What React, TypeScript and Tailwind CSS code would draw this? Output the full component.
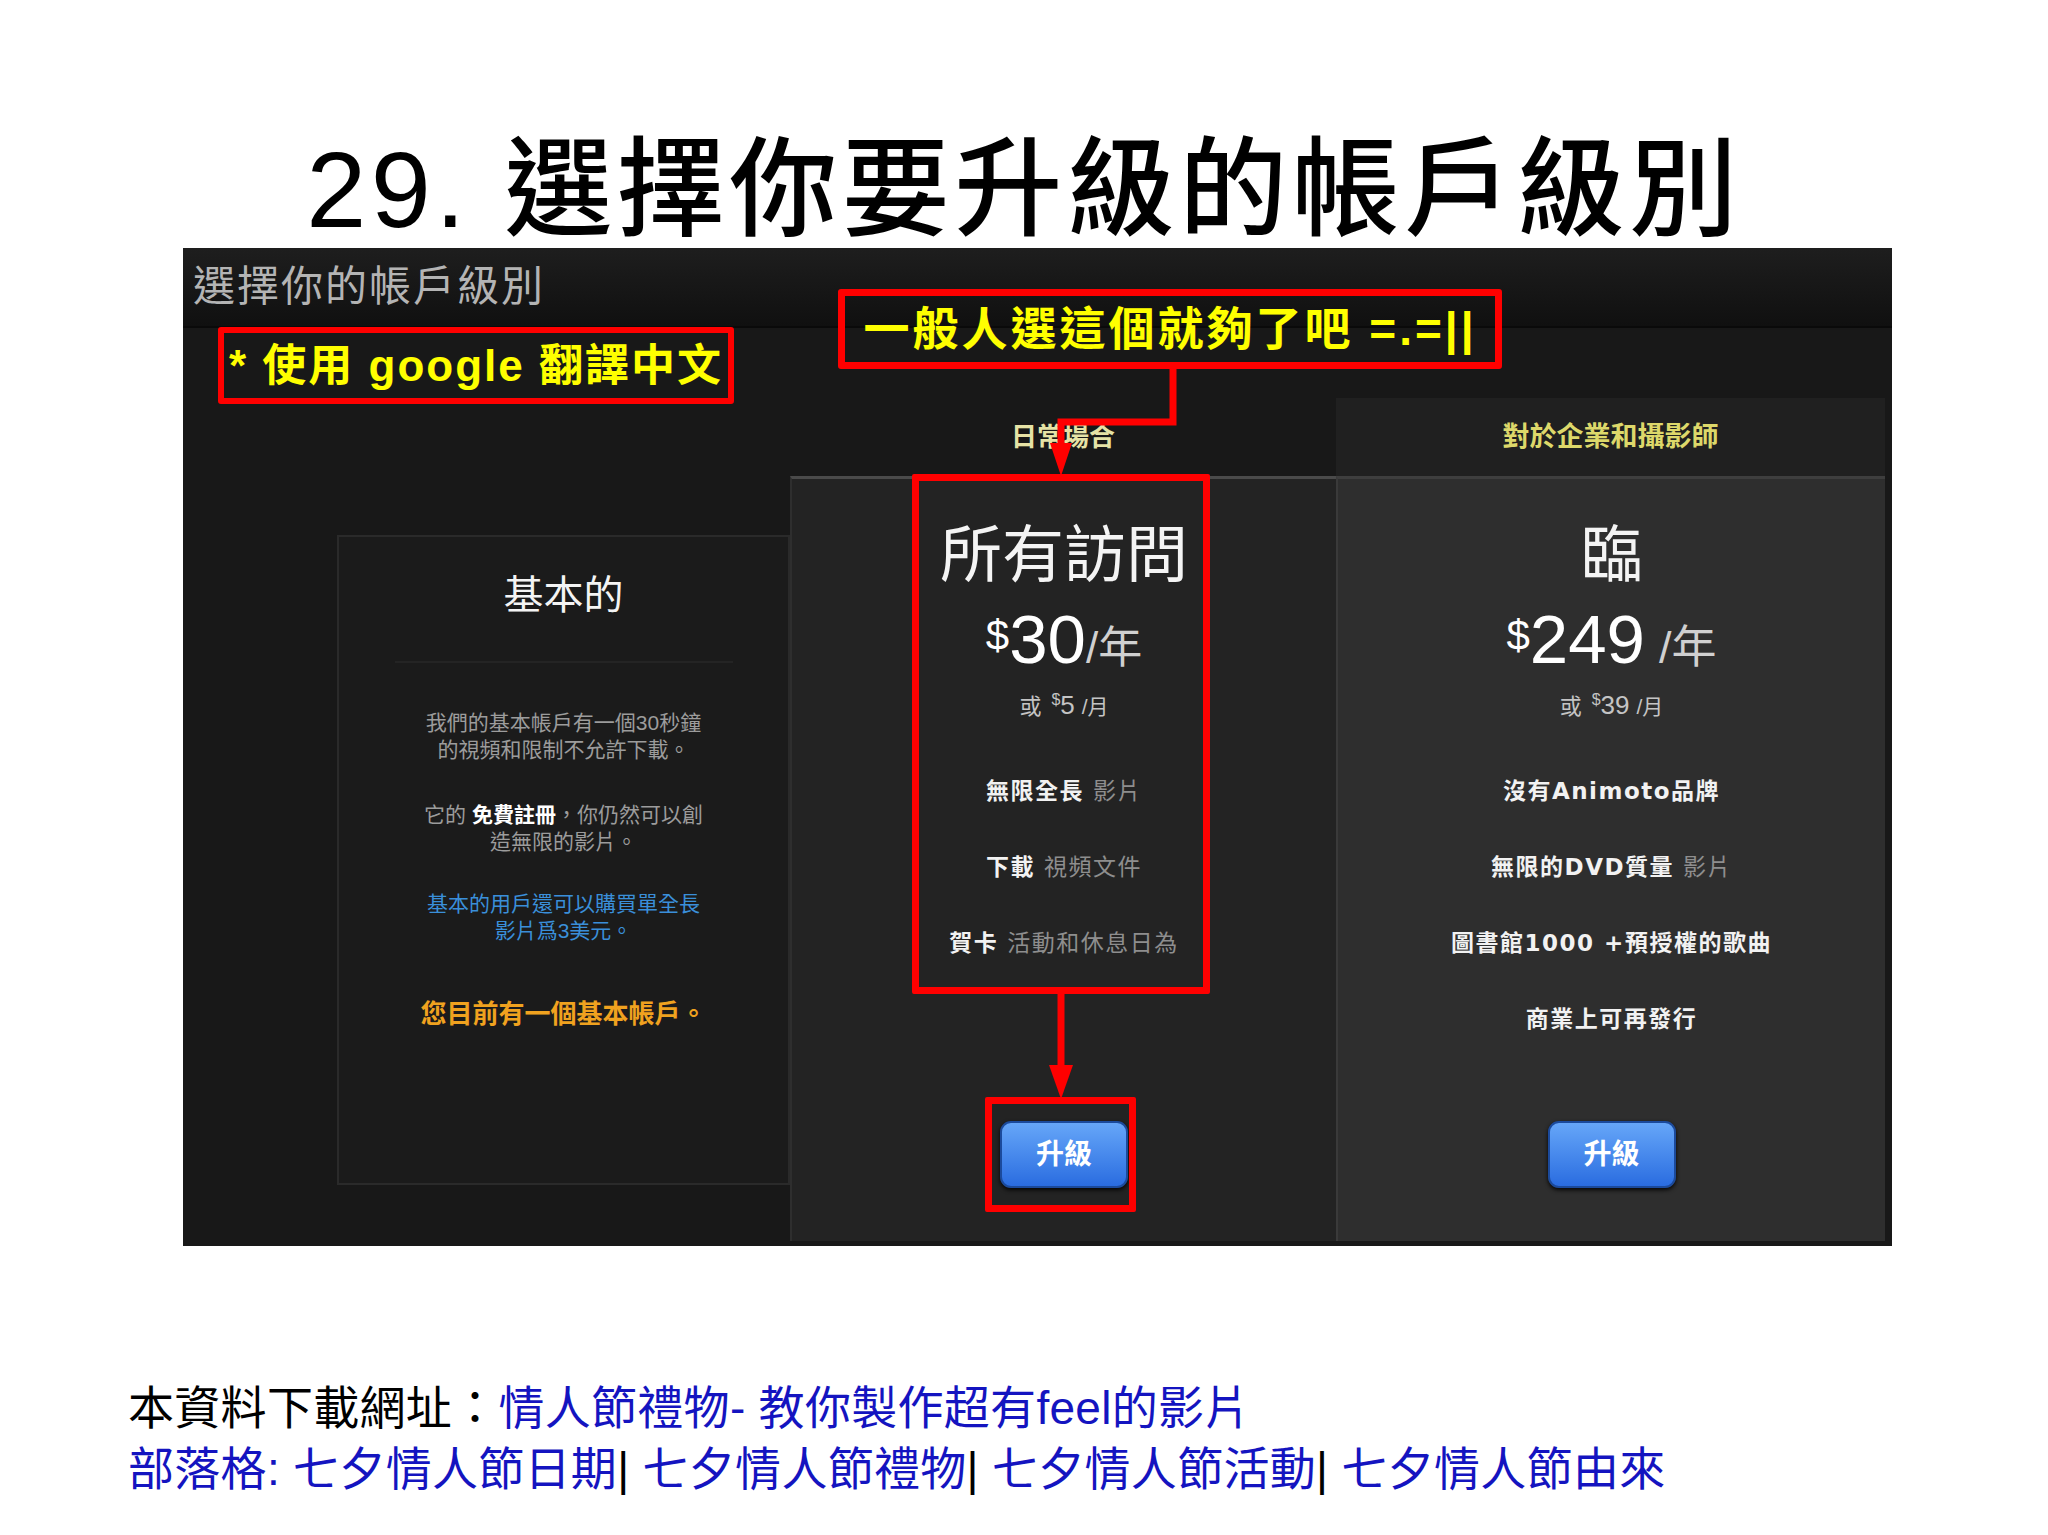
import React from "react";

function Feature({ bold, rest }: { bold: string; rest?: string }) {
  return (
    <div className="h-[76px] whitespace-nowrap font-['DejaVu_Sans','Noto_Sans_CJK_TC',sans-serif] text-[23px] leading-[76px] tracking-[1.5px]">
      <span className="font-bold text-[#f2f2f2]">{bold}</span>
      {rest && <span className="text-[#8e8e8e]"> {rest}</span>}
    </div>
  );
}

function UpgradeButton() {
  return (
    <div className="flex h-[67px] w-[128px] items-center justify-center rounded-[11px] border-2 border-[#1b4a9c] bg-linear-to-b from-[#66a6f8] to-[#2a6ce0] text-[28px] font-bold leading-none text-white shadow-[0_2px_4px_rgba(0,0,0,0.9)]">
      升級
    </div>
  );
}

function BasicCard() {
  return (
    <div className="mt-[207px] flex h-[650px] w-[453px] flex-col items-center border-2 border-[#2a2a2a] bg-[#1b1b1b] pt-[38px] text-center">
      <div className="text-[40px] leading-none text-[#f4f4f4]">基本的</div>
      <div className="mt-[46px] h-[2px] w-[338px] bg-[#242424]" />
      <p className="mt-[46px] text-[21px] leading-[27px] text-[#9c9c9c]">
        我們的基本帳戶有一個30秒鐘
        <br />
        的視頻和限制不允許下載。
      </p>
      <p className="mt-[38px] text-[21px] leading-[27px] text-[#9c9c9c]">
        它的 <span className="font-bold text-white">免費註冊</span>，你仍然可以創
        <br />
        造無限的影片。
      </p>
      <p className="mt-[35px] text-[21px] leading-[27px] text-[#3a8fd9]">
        基本的用戶還可以購買單全長
        <br />
        影片爲3美元。
      </p>
      <p className="mt-[57px] text-[26px] font-bold leading-[27px] text-[#f0a21f]">
        您目前有一個基本帳戶。
      </p>
    </div>
  );
}

function Panel() {
  return (
    <div className="relative ml-[183px] flex h-[998px] w-[1709px] flex-col bg-[#181818]">
      {/* window heading */}
      <div className="flex h-[80px] items-center border-b-2 border-[#0a0a0a] bg-linear-to-b from-[#1e1e1e] to-[#101010] pl-[10px] text-[42px] leading-none tracking-[2px] text-[#b4b4b4]">
        選擇你的帳戶級別
      </div>

      <div className="flex flex-1 items-start pb-[5px] pl-[154px] pr-[7px]">
        <BasicCard />

        {/* all access */}
        <div className="flex w-[546px] flex-col self-stretch pt-[70px]">
          <div className="flex h-[78px] items-center justify-center text-[26px] font-bold leading-none text-[#e6e3a6]">
            日常場合
          </div>
          <div className="flex flex-1 flex-col items-center border-l-2 border-t-[3px] border-l-[#2e2e2e] border-t-[#4a4a4a] bg-[#232323] pb-[53px] pt-[46px]">
            <div className="text-[62px] leading-none text-[#f4f4f4]">所有訪問</div>
            <div className="mt-[18px] flex items-baseline text-white">
              <span className="mt-[10px] self-start text-[42px] leading-none">$</span>
              <span className="text-[69px] leading-none">30</span>
              <span className="text-[44px] leading-none text-[#d0d0d0]">/年</span>
            </div>
            <div className="mt-[18px] flex items-baseline text-[#c4c4c4]">
              <span className="text-[22px] leading-none">或</span>
              <span className="ml-[10px] self-start text-[16px] leading-none">$</span>
              <span className="text-[26px] leading-none">5</span>
              <span className="ml-[7px] text-[21px] leading-none">/月</span>
            </div>
            <div className="mt-[35px] flex flex-col items-center">
              <Feature bold="無限全長" rest="影片" />
              <Feature bold="下載" rest="視頻文件" />
              <Feature bold="賀卡" rest="活動和休息日為" />
            </div>
            <div className="flex-1" />
            <UpgradeButton />
          </div>
        </div>

        {/* pro */}
        <div className="flex w-[549px] flex-col self-stretch pt-[70px]">
          <div className="flex h-[78px] items-center justify-center bg-[#202020] text-[27px] font-bold leading-none text-[#ddd86a]">
            對於企業和攝影師
          </div>
          <div className="flex flex-1 flex-col items-center border-l-2 border-t-[3px] border-l-[#3a3a3a] border-t-[#3e3e3e] bg-[#2e2e2e] pb-[53px] pt-[46px]">
            <div className="text-[62px] leading-none text-[#f4f4f4]">臨</div>
            <div className="mt-[18px] flex items-baseline text-white">
              <span className="mt-[10px] self-start text-[42px] leading-none">$</span>
              <span className="text-[69px] leading-none">249</span>
              <span className="ml-[14px] text-[45px] leading-none text-[#d0d0d0]">/年</span>
            </div>
            <div className="mt-[18px] flex items-baseline text-[#c4c4c4]">
              <span className="text-[22px] leading-none">或</span>
              <span className="ml-[10px] self-start text-[16px] leading-none">$</span>
              <span className="text-[26px] leading-none">39</span>
              <span className="ml-[7px] text-[21px] leading-none">/月</span>
            </div>
            <div className="mt-[35px] flex flex-col items-center">
              <Feature bold="沒有Animoto品牌" />
              <Feature bold="無限的DVD質量" rest="影片" />
              <Feature bold="圖書館1000 +預授權的歌曲" />
              <Feature bold="商業上可再發行" />
            </div>
            <div className="flex-1" />
            <UpgradeButton />
          </div>
        </div>
      </div>

      {/* red annotations */}
      <div className="absolute left-[35px] top-[79px] flex h-[77px] w-[516px] items-center justify-center rounded-[3px] border-[6px] border-[#ff0000] whitespace-nowrap text-[44px] font-bold leading-none tracking-[2px] text-[#ffff00]">
        * 使用 google 翻譯中文
      </div>
      <div className="absolute left-[655px] top-[41px] flex h-[80px] w-[664px] items-center justify-center rounded-[3px] border-[7px] border-[#ff0000] whitespace-nowrap text-[46px] font-bold leading-none tracking-[3px] text-[#ffff00]">
        一般人選這個就夠了吧 =.=||
      </div>
      <div className="absolute left-[729px] top-[226px] h-[520px] w-[298px] rounded-[2px] border-[7px] border-[#ff0000]" />
      <div className="absolute left-[802px] top-[849px] h-[115px] w-[151px] rounded-[2px] border-[7px] border-[#ff0000]" />
      <svg className="pointer-events-none absolute left-0 top-0" width="1709" height="998" viewBox="0 0 1709 998">
        <polyline points="990,121 990,174 878,174 878,198" fill="none" stroke="#ff0000" strokeWidth="7" />
        <polygon points="867,195 889,195 878,228" fill="#ff0000" />
        <line x1="878" y1="746" x2="878" y2="820" stroke="#ff0000" strokeWidth="7" />
        <polygon points="866,817 890,817 878,851" fill="#ff0000" />
      </svg>
    </div>
  );
}

export default function App() {
  return (
    <div className="relative h-[1535px] w-[2048px] overflow-hidden bg-white font-['Liberation_Sans','Noto_Sans_CJK_TC',sans-serif]">
      <h1 className="box-border h-[248px] whitespace-nowrap pt-[136px] text-center text-[108px] font-medium leading-none tracking-[4.5px] text-black">
        29. 選擇你要升級的帳戶級別
      </h1>

      <Panel />

      <div className="mt-[132px] whitespace-nowrap pl-[128px] text-[46px] leading-[61px] tracking-[0.3px]">
        <div>
          <span className="text-black">本資料下載網址：</span>
          <span className="text-[#1414c0]">情人節禮物- 教你製作超有feel的影片</span>
        </div>
        <div className="text-[#1414c0]">
          部落格: 七夕情人節日期<span className="text-black">|</span> 七夕情人節禮物
          <span className="text-black">|</span> 七夕情人節活動<span className="text-black">|</span> 七夕情人節由來
        </div>
      </div>
    </div>
  );
}
